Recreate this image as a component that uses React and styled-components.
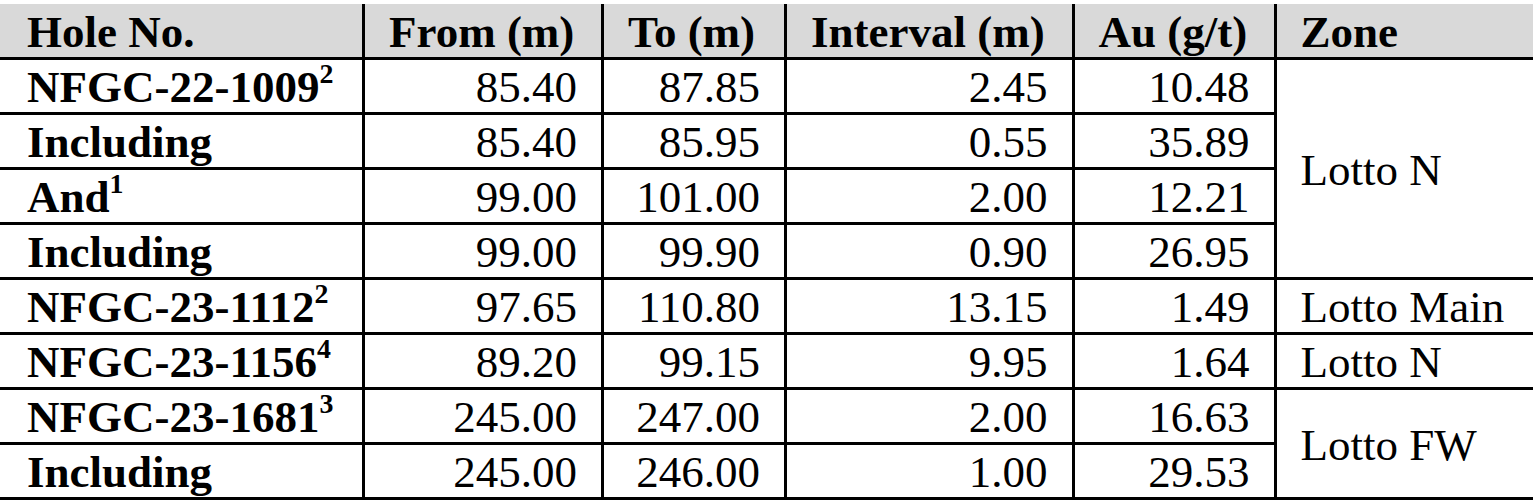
import React from 'react';
import styled, { createGlobalStyle } from 'styled-components';

const GlobalStyle = createGlobalStyle`
  body {
    margin: 0;
    padding-top: 4px;
    background: #ffffff;
    font-family: "Liberation Serif", "Times New Roman", serif;
    color: #000000;
  }
`;

const Table = styled.table`
  width: 1533px;
  border-collapse: collapse;
  table-layout: fixed;
  font-size: 45px;
`;

const Col = styled.col`
  width: ${(p) => p.$w}px;
`;

const HeadCell = styled.th`
  background: #d9d9d9;
  font-weight: 700;
  text-align: left;
  height: 50px;
  line-height: 50px;
  padding: 3px 0 0 ${(p) => (p.$first ? 27 : 24)}px;
  white-space: nowrap;
  border-bottom: 3px solid #000;
  border-left: ${(p) => (p.$first ? 'none' : '3px solid #000')};
`;

const Cell = styled.td`
  height: 50px;
  line-height: 50px;
  padding: 2px 24px 0 ${(p) => (p.$first ? 27 : 24)}px;
  white-space: nowrap;
  vertical-align: middle;
  text-align: ${(p) => (p.$num ? 'right' : 'left')};
  font-weight: ${(p) => (p.$bold ? 700 : 400)};
  border-bottom: 3px solid #000;
  border-left: ${(p) => (p.$first ? 'none' : '3px solid #000')};
`;

const Sup = styled.span`
  font-size: 0.62em;
  vertical-align: 0.68em;
  line-height: 0;
`;

const columns = [
  { label: 'Hole No.', w: 363.5 },
  { label: 'From (m)', w: 239 },
  { label: 'To (m)', w: 183 },
  { label: 'Interval (m)', w: 287.5 },
  { label: 'Au (g/t)', w: 202 },
  { label: 'Zone', w: 258 },
];

const rows = [
  { hole: 'NFGC-22-1009', sup: '2', from: '85.40', to: '87.85', interval: '2.45', au: '10.48', zone: 'Lotto N', span: 4 },
  { hole: 'Including', from: '85.40', to: '85.95', interval: '0.55', au: '35.89' },
  { hole: 'And', sup: '1', from: '99.00', to: '101.00', interval: '2.00', au: '12.21' },
  { hole: 'Including', from: '99.00', to: '99.90', interval: '0.90', au: '26.95' },
  { hole: 'NFGC-23-1112', sup: '2', from: '97.65', to: '110.80', interval: '13.15', au: '1.49', zone: 'Lotto Main', span: 1 },
  { hole: 'NFGC-23-1156', sup: '4', from: '89.20', to: '99.15', interval: '9.95', au: '1.64', zone: 'Lotto N', span: 1 },
  { hole: 'NFGC-23-1681', sup: '3', from: '245.00', to: '247.00', interval: '2.00', au: '16.63', zone: 'Lotto FW', span: 2 },
  { hole: 'Including', from: '245.00', to: '246.00', interval: '1.00', au: '29.53' },
];

const App = () => (
  <>
    <GlobalStyle />
    <Table>
      <colgroup>
        {columns.map((c) => (
          <Col key={c.label} $w={c.w} />
        ))}
      </colgroup>
      <thead>
        <tr>
          {columns.map((c, i) => (
            <HeadCell key={c.label} $first={i === 0}>
              {c.label}
            </HeadCell>
          ))}
        </tr>
      </thead>
      <tbody>
        {rows.map((r, i) => (
          <tr key={i}>
            <Cell $first $bold>
              {r.hole}
              {r.sup && <Sup>{r.sup}</Sup>}
            </Cell>
            <Cell $num>{r.from}</Cell>
            <Cell $num>{r.to}</Cell>
            <Cell $num>{r.interval}</Cell>
            <Cell $num>{r.au}</Cell>
            {r.zone && <Cell rowSpan={r.span}>{r.zone}</Cell>}
          </tr>
        ))}
      </tbody>
    </Table>
  </>
);

export default App;
